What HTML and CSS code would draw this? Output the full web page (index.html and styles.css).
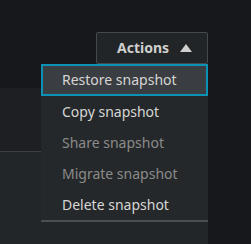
FILE: index.html
```html
<!DOCTYPE html>
<html lang="en">
<head>
    <meta charset="UTF-8">
    <title>Snapshot actions</title>
    <link rel="stylesheet" href="styles.css">
</head>
<body>
    <div class="page">
        <div class="toolbar">
            <button type="button" class="actions-btn">
                Actions
                <svg class="caret" width="12" height="8" viewBox="0 0 12 8"><path d="M6 0 L12 8 L0 8 Z" fill="currentColor"/></svg>
            </button>
        </div>
        <div class="panel-head"></div>
        <div class="panel-body"></div>

        <!-- Dropdown opened from the Actions button -->
        <ul class="menu">
            <li class="menu-item active">Restore snapshot</li>
            <li class="menu-item">Copy snapshot</li>
            <li class="menu-item disabled">Share snapshot</li>
            <li class="menu-item disabled">Migrate snapshot</li>
            <li class="menu-item">Delete snapshot</li>
        </ul>
    </div>
</body>
</html>
```

FILE: styles.css
```css
body {
    margin: 0;
    background-color: #16181c;
    font-family: 'Noto Sans', sans-serif;
    font-size: 14px;
}

.page {
    position: relative;
    width: 208px;
    height: 244px;
    display: flex;
    flex-direction: column;
}

.toolbar {
    height: 88px;
    padding-top: 32px;
    box-sizing: border-box;
    display: flex;
    justify-content: flex-end;
    align-items: flex-start;
}

.actions-btn {
    width: 112px;
    height: 32px;
    background-color: #222528;
    border: 1px solid #45484c;
    border-radius: 2px;
    color: #cfcfcd;
    font-family: inherit;
    font-size: 14px;
    font-weight: bold;
    display: flex;
    align-items: center;
    justify-content: flex-start;
    gap: 11px;
    padding: 0 0 1px 20px;
}

.caret {
    display: block;
}

.panel-head {
    height: 63px;
    background-color: #1d1f23;
    border-bottom: 1px solid #3c3f43;
}

.panel-body {
    flex: 1;
    background-color: #232629;
}

/* Dropdown list */
.menu {
    position: absolute;
    left: 41px;
    top: 64px;
    width: 167px;
    margin: 0;
    padding: 0;
    list-style: none;
    background-color: #25282b;
    border-bottom: 2px solid #4a4d51;
}

.menu-item {
    height: 31px;
    line-height: 31px;
    padding-left: 21px;
    color: #d6d6d4;
    box-sizing: border-box;
}

.menu-item.active {
    height: 32px;
    line-height: 28px;
    padding-left: 19px;
    background-color: #3a3d41;
    border: 2px solid #0d90b6;
}

.menu-item.disabled {
    color: #8b8b89;
}
```
